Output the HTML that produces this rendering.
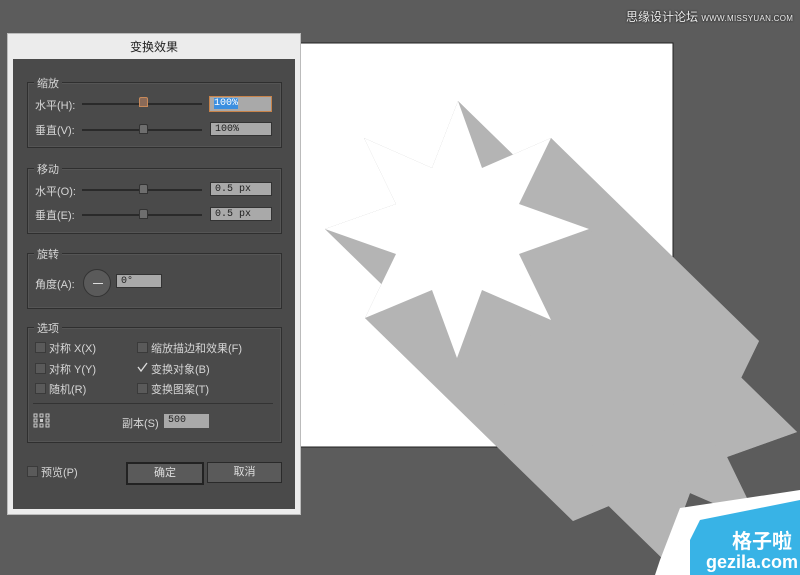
<!DOCTYPE html>
<html><head><meta charset="utf-8"><style>
body{margin:0;width:800px;height:575px;background:#5c5c5c;position:relative;overflow:hidden;font-family:"Liberation Sans","Noto Sans CJK SC",sans-serif;}
.a{position:absolute}
.lbl{position:absolute;color:#d6d6d6;font-size:11px;white-space:nowrap}
.grp{position:absolute;border:1px solid #2f2f2f;box-shadow:inset 0 0 0 1px #555}
.gt{position:absolute;top:-8px;left:6px;background:#4a4a4a;padding:0 3px;color:#d6d6d6;font-size:11px}
.tr{position:absolute;height:2px;background:#2a2a2a;width:120px}
.th{position:absolute;width:7px;height:8px;background:#6e6e6e;border:1px solid #333;border-radius:2px 2px 0 0}
.fld{position:absolute;height:14px;background:#a9a9a9;border:1px solid #333;color:#222;font-size:10px;font-family:"Liberation Mono",monospace;line-height:14px;padding-left:4px;box-sizing:border-box}
.cb{position:absolute;width:9px;height:9px;background:#5a5a5a;border:1px solid #3a3a3a}
.btn{position:absolute;height:19px;background:#5a5a5a;border:1px solid #2a2a2a;color:#ddd;font-size:11px;text-align:center;line-height:19px}
</style></head><body>
<svg class="a" style="left:0;top:0" width="800" height="575">
<defs><polygon id="s" points="458,101 482,168 551,138 519,204 589,229 519,254 551,320 482,290 457,358 432,290 365,318 396,254 325,229 396,204 364,138 432,168"/></defs>
<rect x="300" y="43" width="373" height="404" fill="#fff" stroke="#222" stroke-width="1"/>
<g fill="#b4b4b4">
<use href="#s"/><use href="#s" transform="translate(208,203)"/>
<polygon points="458,101 482,168 690,371 666,304"/>
<polygon points="482,168 551,138 759,341 690,371"/>
<polygon points="551,138 519,204 727,407 759,341"/>
<polygon points="519,204 589,229 797,432 727,407"/>
<polygon points="589,229 519,254 727,457 797,432"/>
<polygon points="519,254 551,320 759,523 727,457"/>
<polygon points="551,320 482,290 690,493 759,523"/>
<polygon points="482,290 457,358 665,561 690,493"/>
<polygon points="457,358 432,290 640,493 665,561"/>
<polygon points="432,290 365,318 573,521 640,493"/>
<polygon points="365,318 396,254 604,457 573,521"/>
<polygon points="396,254 325,229 533,432 604,457"/>
<polygon points="325,229 396,204 604,407 533,432"/>
<polygon points="396,204 364,138 572,341 604,407"/>
<polygon points="364,138 432,168 640,371 572,341"/>
<polygon points="432,168 458,101 666,304 640,371"/>
</g>
<use href="#s" fill="#fff"/>
<polygon points="660,560 680,508 800,490 800,575 655,575" fill="#fff"/>
<polygon points="690,540 700,520 800,500 800,575 690,575" fill="#38b3e6"/>
</svg>
<div class="a" style="left:732px;top:530px;color:#fff;font-size:20px;font-weight:bold;font-family:'Noto Sans CJK SC',sans-serif;line-height:20px">格子啦</div>
<div class="a" style="left:706px;top:552px;color:#fff;font-size:18px;font-weight:bold;line-height:20px">gezila.com</div>
<div class="a" style="left:626px;top:8px;color:#eee;font-size:12px;white-space:nowrap;text-shadow:0 0 2px #000">思缘设计论坛 <span style="font-size:8px;letter-spacing:0.3px">WWW.MISSYUAN.COM</span></div>

<div class="a" style="left:7px;top:33px;width:294px;height:482px;background:#ececec;border:1px solid #bbb;box-sizing:border-box"></div>
<div class="a" style="left:7px;top:38px;width:294px;text-align:center;font-size:12px;color:#222">变换效果</div>
<div class="a" style="left:13px;top:59px;width:282px;height:450px;background:#4a4a4a"></div>

<div class="grp" style="left:27px;top:82px;width:253px;height:64px"><span class="gt">缩放</span></div>
<div class="lbl" style="left:35px;top:97px">水平(H):</div>
<div class="tr" style="left:82px;top:103px"></div><div class="th" style="left:139px;top:97px;background:#8a6a58;border-color:#c98a5a"></div>
<div class="fld" style="left:209px;top:96px;width:63px;height:16px;border:1px solid #c8834a"><span style="background:#3b8fe0;color:#fff">100%</span></div>
<div class="lbl" style="left:35px;top:122px">垂直(V):</div>
<div class="tr" style="left:82px;top:129px"></div><div class="th" style="left:139px;top:124px"></div>
<div class="fld" style="left:210px;top:122px;width:62px">100%</div>

<div class="grp" style="left:27px;top:168px;width:253px;height:64px"><span class="gt">移动</span></div>
<div class="lbl" style="left:35px;top:183px">水平(O):</div>
<div class="tr" style="left:82px;top:189px"></div><div class="th" style="left:139px;top:184px"></div>
<div class="fld" style="left:210px;top:182px;width:62px">0.5 px</div>
<div class="lbl" style="left:35px;top:207px">垂直(E):</div>
<div class="tr" style="left:82px;top:214px"></div><div class="th" style="left:139px;top:209px"></div>
<div class="fld" style="left:210px;top:207px;width:62px">0.5 px</div>

<div class="grp" style="left:27px;top:253px;width:253px;height:54px"><span class="gt">旋转</span></div>
<div class="lbl" style="left:35px;top:276px">角度(A):</div>
<div class="a" style="left:83px;top:269px;width:26px;height:26px;border-radius:50%;background:#5a5a5a;border:1px solid #333"></div>
<div class="a" style="left:93px;top:283px;width:10px;height:1px;background:#ddd"></div>
<div class="fld" style="left:116px;top:274px;width:46px">0°</div>

<div class="grp" style="left:27px;top:327px;width:253px;height:114px"><span class="gt">选项</span></div>
<div class="cb" style="left:35px;top:342px"></div><div class="lbl" style="left:49px;top:340px">对称 X(X)</div>
<div class="cb" style="left:137px;top:342px"></div><div class="lbl" style="left:151px;top:340px">缩放描边和效果(F)</div>
<div class="cb" style="left:35px;top:363px"></div><div class="lbl" style="left:49px;top:361px">对称 Y(Y)</div>
<svg class="a" style="left:137px;top:362px" width="11" height="11"><path d="M1 5 L4 9 L10 1" fill="none" stroke="#ddd" stroke-width="1.3"/></svg><div class="lbl" style="left:151px;top:361px">变换对象(B)</div>
<div class="cb" style="left:35px;top:383px"></div><div class="lbl" style="left:49px;top:381px">随机(R)</div>
<div class="cb" style="left:137px;top:383px"></div><div class="lbl" style="left:151px;top:381px">变换图案(T)</div>
<div class="a" style="left:33px;top:403px;width:240px;height:1px;background:#333"></div>
<svg class="a" style="left:33px;top:413px" width="18" height="16"><g fill="none" stroke="#ccc"><rect x="1" y="1" width="3" height="3"/><rect x="7" y="1" width="3" height="3"/><rect x="13" y="1" width="3" height="3"/><rect x="1" y="6" width="3" height="3"/><rect x="13" y="6" width="3" height="3"/><rect x="1" y="11" width="3" height="3"/><rect x="7" y="11" width="3" height="3"/><rect x="13" y="11" width="3" height="3"/></g><rect x="7" y="6" width="3" height="3" fill="#ccc"/></svg>
<div class="lbl" style="left:122px;top:415px">副本(S)</div>
<div class="fld" style="left:164px;top:414px;width:45px;border:none">500</div>

<div class="cb" style="left:27px;top:466px"></div><div class="lbl" style="left:41px;top:464px">预览(P)</div>
<div class="btn" style="left:126px;top:462px;width:74px;border:2px solid #222">确定</div>
<div class="btn" style="left:207px;top:462px;width:73px">取消</div>
</body></html>
